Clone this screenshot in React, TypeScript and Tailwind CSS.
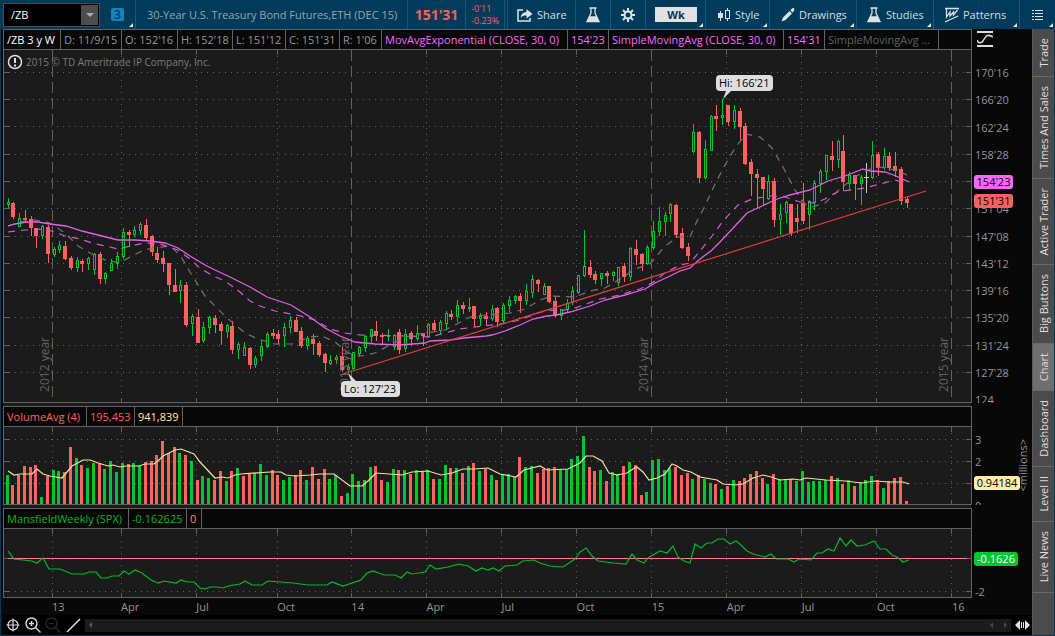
import React from 'react';

type Candle = [number, number, number, number, number];

const UP = 1;
const DOWN = -1;
const FLAT = 0;

// [direction, high, body top, body bottom, low]
const candles: Candle[] = [
  [UP, 198, 202, 205, 208], [DOWN, 202, 203, 217, 219], [UP, 213, 218, 227, 227], [DOWN, 210, 218, 220, 223],
  [DOWN, 216, 219, 228, 236], [DOWN, 228, 228, 236, 248], [UP, 225, 226, 236, 239], [DOWN, 225, 227, 254, 263],
  [UP, 247, 249, 255, 257], [UP, 241, 245, 250, 253], [DOWN, 241, 246, 259, 260], [DOWN, 256, 258, 268, 270],
  [UP, 257, 260, 268, 272], [DOWN, 259, 261, 264, 272], [UP, 257, 258, 264, 270], [UP, 253, 254, 270, 275],
  [DOWN, 252, 254, 279, 284], [UP, 272, 273, 279, 284], [UP, 259, 263, 271, 271], [UP, 252, 256, 264, 269],
  [UP, 228, 232, 257, 259], [DOWN, 230, 232, 235, 247], [UP, 226, 230, 235, 237], [UP, 222, 224, 231, 235],
  [DOWN, 219, 225, 238, 240], [DOWN, 235, 236, 252, 256], [DOWN, 247, 253, 260, 263], [DOWN, 251, 258, 264, 272],
  [DOWN, 263, 263, 285, 295], [DOWN, 269, 285, 292, 292], [UP, 280, 285, 291, 303], [DOWN, 282, 285, 325, 327],
  [UP, 314, 316, 324, 336], [DOWN, 309, 317, 343, 343], [UP, 322, 327, 341, 343], [UP, 316, 317, 328, 334],
  [DOWN, 315, 318, 325, 333], [DOWN, 322, 324, 331, 345], [UP, 324, 325, 332, 338], [DOWN, 321, 326, 350, 354],
  [UP, 342, 344, 350, 359], [UP, 342, 347, 356, 356], [DOWN, 347, 348, 365, 369], [UP, 356, 358, 365, 368],
  [UP, 340, 346, 356, 361], [UP, 332, 334, 347, 348], [DOWN, 329, 333, 336, 339], [DOWN, 330, 334, 339, 344],
  [UP, 323, 327, 336, 347], [UP, 316, 320, 328, 333], [DOWN, 317, 320, 332, 332], [DOWN, 327, 331, 346, 348],
  [UP, 336, 338, 346, 350], [DOWN, 334, 339, 344, 355], [DOWN, 341, 343, 355, 357], [DOWN, 353, 354, 363, 372],
  [UP, 355, 360, 364, 365], [UP, 355, 357, 360, 364], [DOWN, 347, 356, 370, 372], [UP, 364, 367, 370, 373],
  [UP, 352, 352, 369, 370], [UP, 346, 347, 354, 357], [UP, 335, 336, 348, 352], [UP, 329, 329, 337, 344],
  [DOWN, 321, 331, 336, 341], [DOWN, 333, 335, 337, 344], [UP, 329, 335, 337, 341], [UP, 334, 335, 347, 350],
  [DOWN, 329, 332, 350, 354], [UP, 329, 334, 349, 352], [DOWN, 331, 333, 339, 346], [UP, 325, 333, 339, 341],
  [DOWN, 333, 333, 336, 346], [UP, 323, 324, 337, 338], [DOWN, 320, 323, 330, 332], [UP, 320, 322, 331, 334],
  [UP, 311, 313, 324, 330], [DOWN, 310, 314, 317, 320], [UP, 300, 305, 317, 322], [DOWN, 302, 305, 309, 314],
  [UP, 298, 307, 309, 312], [DOWN, 306, 306, 319, 327], [UP, 313, 316, 319, 326], [DOWN, 312, 316, 319, 325],
  [UP, 305, 309, 319, 321], [DOWN, 307, 308, 322, 327], [UP, 303, 305, 321, 324], [UP, 296, 300, 306, 312],
  [UP, 295, 296, 301, 304], [DOWN, 293, 296, 301, 313], [UP, 284, 291, 301, 305], [UP, 275, 279, 293, 298],
  [DOWN, 279, 280, 284, 292], [UP, 283, 286, 295, 295], [DOWN, 286, 286, 302, 303], [DOWN, 296, 301, 316, 317],
  [UP, 309, 309, 316, 320], [UP, 299, 303, 310, 313], [UP, 286, 291, 303, 305], [UP, 275, 275, 293, 294],
  [UP, 230, 266, 276, 277], [DOWN, 260, 267, 275, 278], [DOWN, 271, 274, 280, 284], [UP, 273, 273, 279, 286],
  [DOWN, 271, 273, 276, 284], [UP, 271, 272, 276, 281], [UP, 267, 267, 283, 286], [DOWN, 263, 266, 277, 282],
  [UP, 247, 248, 277, 281], [DOWN, 240, 249, 255, 265], [DOWN, 253, 254, 264, 271], [UP, 245, 247, 264, 265],
  [UP, 221, 231, 248, 250], [UP, 207, 221, 232, 236], [UP, 212, 215, 222, 236], [UP, 203, 204, 214, 222],
  [DOWN, 204, 205, 235, 238], [DOWN, 228, 233, 248, 249], [DOWN, 243, 247, 256, 261], [UP, 124, 132, 152, 153],
  [DOWN, 131, 132, 178, 183], [UP, 140, 149, 178, 179], [UP, 115, 116, 151, 151], [DOWN, 105, 116, 119, 131],
  [UP, 99, 115, 118, 125], [DOWN, 105, 105, 122, 126], [UP, 105, 110, 122, 129], [DOWN, 108, 111, 127, 140],
  [DOWN, 123, 126, 164, 165], [DOWN, 159, 162, 174, 196], [DOWN, 169, 174, 178, 208], [DOWN, 177, 177, 189, 205],
  [UP, 175, 181, 199, 200], [DOWN, 178, 181, 220, 227], [UP, 204, 214, 220, 235], [UP, 201, 202, 213, 223],
  [DOWN, 204, 204, 233, 236], [DOWN, 204, 218, 222, 233], [DOWN, 183, 203, 221, 224], [UP, 200, 201, 215, 230],
  [UP, 180, 183, 203, 210], [UP, 169, 171, 184, 193], [UP, 155, 155, 172, 180], [DOWN, 141, 156, 160, 171],
  [UP, 140, 141, 160, 168], [DOWN, 135, 151, 182, 191], [UP, 172, 175, 184, 191], [DOWN, 175, 175, 184, 200],
  [UP, 175, 177, 184, 205], [FLAT, 163, 177, 178, 193], [UP, 141, 155, 178, 179], [DOWN, 152, 154, 168, 176],
  [UP, 148, 156, 168, 170], [DOWN, 152, 156, 168, 171], [DOWN, 152, 166, 171, 177], [DOWN, 167, 169, 201, 205],
  [DOWN, 197, 199, 203, 208],
];

// bar heights, negative for a week that closed lower
const volumes = [
  29, -19, -29, -38, -37, -39, 7, -28, 34, 33, -32, -57, 46, -39, 36, 41, -40, 35, 43, 32,
  41, -40, 41, 38, -42, -43, -49, -63, -51, -57, 51, -49, 43, -24, 28, 26, -24, -33, 23, -33,
  36, -28, -30, 31, 40, 29, -34, -29, 24, 27, -29, -34, 24, -37, -25, -35, 25, 29, -8, 11,
  30, 23, 24, 37, -38, -24, 22, 35, -34, 34, -30, 34, -33, 34, -25, 25, 39, -36, 36, -31,
  38, -41, 33, -35, 29, -24, 30, 30, 27, -47, 37, 38, -31, -35, -36, -37, 35, 35, 45, 48,
  68, -37, -33, 34, -23, 32, 30, -38, 42, -39, -9, 12, 44, 45, 34, 36, -37, -29, -31, 25,
  -29, 25, 21, -20, 15, -18, 24, -23, -26, -30, -33, -26, 20, -30, 25, 25, -25, 23, 33, 22,
  23, 23, 24, -28, 26, -20, 24, -18, 22, 24, 28, -24, 16, -23, -26, -27, -3,
];

const smaLine =
  '8,226 15,224 26,222 38,222 50,224 66,226 82,231 98,235 118,240 135,240 150,241 165,243 178,248 190,256 205,265 215,270 230,277 250,287 267,297 291,305 310,317 325,328 340,336 355,342 375,344 400,345 425,343 430,341 450,340 464,338 486,336 492,335 505,331 520,325 533,319 547,316 556,315 570,312 590,306 605,300 625,295 645,289 655,283 670,276 680,271 690,268 700,259 712,250 720,242 735,226 747,213 760,207 777,199 790,195 810,190 828,181 845,176 863,169 870,171 885,172 896,176 909,182';
const emaLine =
  '8,232 25,230 38,229 52,231 65,236 80,239 92,243 110,247 118,249 130,246 145,243 160,244 178,250 190,259 200,268 213,276 225,281 240,292 250,301 260,306 275,311 297,315 315,320 330,329 345,333 360,335 410,336 430,337 445,333 460,329 475,327 500,324 520,320 535,314 548,310 560,311 575,308 600,299 620,295 640,289 652,283 665,273 680,265 690,263 700,251 712,236 723,221 738,205 752,199 770,196 785,197 800,202 815,203 825,199 837,192 850,190 865,188 880,184 895,180 907,183';
const slowLine =
  '8,226 20,222 35,220 50,223 65,233 78,246 90,253 105,260 120,263 130,257 142,251 152,248 170,246 180,255 190,272 205,296 225,316 245,333 258,339 275,344 292,344 310,337 322,336 335,342 348,353 362,356 375,353 390,345 405,337 420,334 445,330 455,325 470,317 485,315 510,313 525,309 540,300 552,296 575,297 590,291 605,288 620,279 635,269 650,264 665,246 678,237 690,237 697,221 705,206 715,184 725,165 735,148 746,134 760,137 772,148 783,167 795,190 805,204 812,207 825,203 840,189 855,177 870,169 880,167 895,170 907,175';
const volumeLine =
  '8,471 14,475 20,474 32,474 37,469 43,474 50,476 62,478 72,466 83,460 90,460 98,463 108,466 113,465 120,467 126,466 139,466 145,464 154,464 158,461 163,456 175,450 181,449 194,454 200,462 215,478 222,477 228,478 235,475 241,474 270,472 281,472 286,475 295,476 310,475 320,474 334,474 350,486 362,486 368,481 376,473 402,475 412,472 428,471 441,475 452,473 463,469 474,469 488,468 500,474 516,477 524,470 540,466 547,470 568,469 580,463 586,456 593,456 602,461 609,473 617,475 627,473 633,469 637,467 643,472 649,480 657,478 665,474 672,464 677,466 683,470 691,472 700,477 717,480 723,484 735,485 743,484 753,478 763,475 771,477 780,480 793,479 800,480 806,478 826,480 845,481 862,483 875,481 890,482 903,482 909,484';
const mansfieldLine =
  '8,551 14,559 32,561 37,563 43,558 49,569 60,569 72,574 84,574 89,572 96,572 101,578 107,578 112,576 119,576 124,571 129,574 135,570 142,573 151,580 158,583 164,581 176,583 181,580 187,582 194,582 200,588 205,589 210,587 217,587 223,588 228,586 240,584 245,581 252,585 262,585 268,581 293,583 308,585 327,585 332,582 343,586 361,580 367,573 373,571 384,575 395,575 401,578 407,572 412,574 425,572 430,565 436,569 448,567 459,564 468,566 476,571 482,568 488,570 493,568 499,571 505,566 517,565 523,561 534,560 540,563 550,566 563,567 575,559 580,552 586,548 592,556 598,561 614,563 626,564 632,554 637,560 644,563 648,558 660,551 667,553 673,546 678,557 684,561 690,563 695,544 701,548 707,543 712,543 718,539 724,539 730,544 736,541 741,545 747,551 753,554 765,557 771,554 776,559 788,559 794,562 799,559 811,560 817,553 822,553 828,549 834,551 840,538 846,546 851,540 857,546 865,545 874,541 880,549 886,549 892,555 897,557 903,562 909,560';

const months = ['13', 'Apr', 'Jul', 'Oct', '14', 'Apr', 'Jul', 'Oct', '15', 'Apr', 'Jul', 'Oct', '16'];
const gridX = [52, 121, 196, 277, 351, 426, 501, 576, 651, 726, 801, 876, 951];
const priceGrid = [72, 99, 126, 154, 181, 208, 236, 263, 290, 317, 345, 372];
// the blank row sits under the moving average tag
const prices = ["170'16", "166'20", "162'24", "158'28", '', "151'04", "147'08", "143'12", "139'16", "135'20", "131'24", "127'28", '124'];

const barX = (i: number) => Math.floor(8 + i * 5.764);

interface GridProps {
  top: number;
  bottom: number;
  rows: number[];
  years?: boolean;
}

const Grid: React.FC<GridProps> = ({ top, bottom, rows, years }) => (
  <g stroke="#626262" shapeRendering="crispEdges">
    {rows.map((y) => (
      <g key={y}>
        <path d={`M9 ${y + 0.5}H965`} strokeDasharray="1 5" />
        <path d={`M4 ${y + 0.5}h5M966 ${y + 0.5}h5`} />
      </g>
    ))}
    {gridX.map((x, i) =>
      years && i % 4 === 0 ? (
        <path key={x} d={`M${x + 0.5} ${top}V${bottom}`} strokeDasharray="11 5" />
      ) : (
        <g key={x}>
          <path d={`M${x + 0.5} ${top + 6}V${bottom - 5}`} strokeDasharray="1 5" />
          <path d={`M${x + 0.5} ${top}v5M${x + 0.5} ${bottom - 4}v4`} />
        </g>
      ),
    )}
  </g>
);

const PriceChart = () => (
  <svg className="block h-[352px] w-full" viewBox="4 50 967 352" preserveAspectRatio="none">
    <Grid top={50} bottom={402} rows={priceGrid} years />
    <g shapeRendering="crispEdges">
      {candles.map(([dir, high, top, bottom, low], i) => {
        const x = barX(i);
        if (dir === UP) {
          return (
            <g key={i} stroke="#00c72f" fill="none">
              <path d={`M${x + 0.5} ${high}V${top}M${x + 0.5} ${bottom}V${low}`} />
              <rect x={x - 0.5} y={top + 0.5} width="2" height={Math.max(bottom - top - 1, 1)} />
            </g>
          );
        }
        const color = dir === DOWN ? '#ff6060' : '#c8c8c8';
        return (
          <g key={i} fill={color}>
            <rect x={x} y={high} width="1" height={low - high} />
            <rect x={x - 2} y={top} width={dir === DOWN ? 4 : 5} height={bottom - top} />
          </g>
        );
      })}
    </g>
    <g fill="none">
      <polyline points={slowLine} stroke="#747474" strokeWidth="1.2" strokeDasharray="7 6" />
      <polyline points={emaLine} stroke="#d65bd6" strokeWidth="1.2" strokeDasharray="7 6" />
      <polyline points={smaLine} stroke="#e65fe6" strokeWidth="1.3" />
      <path d="M340 375 926 191" stroke="#e23c3c" strokeWidth="1.2" />
    </g>
  </svg>
);

const VolumeChart = () => (
  <svg className="block h-[77px] w-full" viewBox="4 427 967 77" preserveAspectRatio="none">
    <Grid top={427} bottom={504} rows={[439, 461, 483]} />
    <g shapeRendering="crispEdges">
      {volumes.map((v, i) => (
        <rect key={i} x={barX(i) - 2} y={504 - Math.abs(v)} width="3" height={Math.abs(v)} fill={v > 0 ? '#00c72f' : '#ff6060'} />
      ))}
    </g>
    <polyline points={volumeLine} fill="none" stroke="#f3e1a0" strokeWidth="1.2" />
  </svg>
);

const MansfieldChart = () => (
  <svg className="block h-[68px] w-full" viewBox="4 529 967 68" preserveAspectRatio="none">
    <Grid top={529} bottom={597} rows={[591]} />
    <path d="M4 558.5h5M966 558.5h5" stroke="#626262" />
    <path d="M8 558.5H967" stroke="#ff7f92" shapeRendering="crispEdges" />
    <polyline points={mansfieldLine} fill="none" stroke="#00b82c" strokeWidth="1.2" />
  </svg>
);

const Flask = () => (
  <svg className="h-4 w-4" viewBox="0 0 16 16" fill="none" stroke="#dce2e6" strokeWidth="1.3">
    <path d="M4.5 1h7M6 1v5L2 14.5h12L10 6V1" />
    <path d="M4.7 10h6.6l2 4.3H2.7z" fill="#dce2e6" />
  </svg>
);

const ShareIcon = () => (
  <svg className="h-4 w-4" viewBox="0 0 16 16" fill="none" stroke="#dce2e6" strokeWidth="1.5">
    <path d="M6 3H1v11h12v-3" />
    <path d="M3.5 11c.5-4 2.5-6 6-6V2L15.5 7 9.5 11.5V8.500C7 8.500 5 9 3.500 11z" fill="#dce2e6" stroke="none" />
  </svg>
);

const Gear = () => (
  <svg className="h-4 w-4" viewBox="0 0 16 16" fill="none" stroke="#dce2e6" strokeWidth="2">
    <circle cx="8" cy="8" r="3.5" />
    <path d="M8 1v3M8 12v3M1 8h3M12 8h3M3 3l2.2 2.2M10.8 10.8 13 13M13 3l-2.2 2.2M5.2 10.8 3 13" />
  </svg>
);

const CandleIcon = () => (
  <svg className="h-4 w-4" viewBox="0 0 16 16" fill="none" stroke="#dce2e6" shapeRendering="crispEdges">
    <path d="M4.5 4v10M11.5 1v3M11.5 12v2" />
    <path d="M2 6h5v5H2z" fill="#dce2e6" stroke="none" />
    <path d="M9.5 3.5h4v8h-4z" />
  </svg>
);

const Pencil = () => (
  <svg className="h-4 w-4" viewBox="0 0 16 16" fill="#dce2e6">
    <path d="M1.5 14.5 3 10.5 9.5 4l2.5 2.5L5.5 13zM10.3 3.2 12 1.5c.7-.6 1.5-.5 2 0 .6.6.6 1.4 0 2L12.8 5.7z" />
  </svg>
);

const PatternIcon = () => (
  <svg className="h-4 w-4" viewBox="0 0 16 16" fill="none" stroke="#dce2e6" strokeWidth="1.3">
    <path d="M1 1.500h14M2.500 2v8l3.500-5v4l3.500-4v3L13.500 3M1 15l13-6" />
  </svg>
);

const ListIcon = () => (
  <svg className="h-3 w-3" viewBox="0 0 12 12" stroke="#dce2e6" shapeRendering="crispEdges">
    <path d="M0 1.5h2M3 1.5h8M0 4.5h2M3 4.5h8M0 7.5h2M3 7.5h8M0 10.5h2M3 10.5h8" />
  </svg>
);

const Corner = () => (
  <svg className="absolute right-0.5 bottom-0.5 h-1 w-1" viewBox="0 0 4 4" fill="#e8e8e8">
    <path d="M4 0v4H0z" />
  </svg>
);

interface ToolProps {
  className: string;
  icon?: React.ReactNode;
  label?: string;
  title?: string;
  menu?: boolean;
}

const Tool: React.FC<ToolProps> = ({ className, icon, label, title, menu }) => (
  <button type="button" aria-label={title} className={`relative flex h-full shrink-0 items-center border-l border-[#1c5677] ${className}`}>
    {icon}
    {label && <span>{label}</span>}
    {menu && <Corner />}
  </button>
);

const TopBar = () => (
  <header className="flex h-[29px] items-center bg-[#003b5b] pl-[3px] text-[11px] text-[#d5dde2]">
    <div className="flex h-6 w-[97px] shrink-0 items-center border border-[#4b4b4b] bg-black">
      <input aria-label="Symbol" defaultValue="/ZB" className="h-full w-[77px] bg-transparent pl-[7px] text-white outline-none" />
      <button type="button" aria-label="Symbol history" className="flex h-[20px] w-[17px] items-center justify-center bg-[#4d4d4d]">
        <svg className="h-1 w-2" viewBox="0 0 8 4" fill="#aaa"><path d="M0 0h8L4 4z" /></svg>
      </button>
    </div>
    <button type="button" className="relative flex h-full w-[35px] shrink-0 items-center justify-center">
      <span className="flex h-[13px] w-[13px] items-center justify-center rounded-xs bg-[#1583ba] text-[12px] font-semibold text-[#003b5b]">3</span>
      <Corner />
    </button>
    <div className="flex h-full min-w-0 flex-1 items-center overflow-hidden border-l border-[#1c5677] pl-[11px] whitespace-nowrap text-[#96a5ae]">
      30-Year U.S. Treasury Bond Futures,ETH (DEC 15)
    </div>
    <div className="flex h-full w-[58px] shrink-0 items-center justify-center border-l border-[#1c5677] text-[14px] font-bold text-[#ff6060]">151'31</div>
    <div className="flex h-full w-[39px] shrink-0 flex-col justify-center border-l border-[#1c5677] pl-[5px] text-[9px] leading-[12px] text-[#ff6060]">
      <span>-0'11</span>
      <span>-0.23%</span>
    </div>
    <div className="h-full w-[3px] shrink-0 border-l border-[#1c5677]" />
    <Tool className="w-[68px] gap-1 pl-[9px]" icon={<ShareIcon />} label="Share" />
    <Tool className="w-[35px] justify-center" icon={<Flask />} title="Lab" />
    <Tool className="w-[35px] justify-center" icon={<Gear />} title="Settings" />
    <button type="button" className="relative flex h-full w-[60px] shrink-0 items-center border-l border-[#1c5677] pl-[9px]">
      <span className="flex h-[15px] w-[42px] items-center justify-center bg-[#e1e1e1] font-bold text-[#003b5b]">Wk</span>
      <Corner />
    </button>
    <Tool className="w-[64px] gap-[3px] pl-[10px]" icon={<CandleIcon />} label="Style" menu />
    <Tool className="w-[87px] gap-[3px] pl-[10px]" icon={<Pencil />} label="Drawings" menu />
    <Tool className="w-[77px] gap-1 pl-[9px]" icon={<Flask />} label="Studies" menu />
    <Tool className="w-[86px] gap-[3px] pl-[10px]" icon={<PatternIcon />} label="Patterns" menu />
    <Tool className="w-[36px] pl-3" icon={<ListIcon />} title="Chart list" menu />
  </header>
);

interface CellProps {
  className: string;
  children: React.ReactNode;
}

const Cell: React.FC<CellProps> = ({ className, children }) => (
  <div className={`flex shrink-0 items-center border-r border-[#626262] pl-[3px] whitespace-nowrap ${className}`}>{children}</div>
);

interface PanelProps {
  header: React.ReactNode;
  axis: React.ReactNode;
  axisSize: string;
  children: React.ReactNode;
}

const Panel: React.FC<PanelProps> = ({ header, axis, axisSize, children }) => (
  <section className="flex">
    <div className="min-w-0 flex-1 border-x border-b border-[#626262] bg-[#1b1b1b]">
      <div className="flex h-[21px] overflow-hidden border-y border-[#626262] bg-[#080808]">{header}</div>
      <div className="relative">{children}</div>
    </div>
    <div className={`relative w-[60px] shrink-0 overflow-hidden text-[#959595] ${axisSize}`}>{axis}</div>
  </section>
);

const YearLabel: React.FC<CellProps> = ({ className, children }) => (
  <span className={`absolute bottom-[10px] rotate-180 text-[12px] leading-[14px] text-[#626262] [writing-mode:vertical-rl] ${className}`}>{children}</span>
);

const tag = 'absolute left-[2px] flex h-[14px] items-center justify-center rounded-[3px]';

const tabs = [
  { name: 'Trade', size: 'h-[48px]' },
  { name: 'Times And Sales', size: 'h-[102px]' },
  { name: 'Active Trader', size: 'h-[86px]' },
  { name: 'Big Buttons', size: 'h-[79px]' },
  { name: 'Chart', size: 'h-[47px]', active: true },
  { name: 'Dashboard', size: 'h-[76px]' },
  { name: 'Level II', size: 'h-[55px]' },
  { name: 'Live News', size: 'h-[71px]' },
];

const SideTabs = () => (
  <nav className="flex w-[22px] shrink-0 flex-col border-l border-[#5c5c5c] bg-[#4b4b4b]">
    {tabs.map((tab) => (
      <button
        key={tab.name}
        type="button"
        className={`flex w-full items-center justify-center border-b border-[#696969] text-[#dedede] ${tab.size} ${tab.active ? 'bg-[#6f6f6f]' : ''}`}
      >
        <span className="rotate-180 [writing-mode:vertical-rl]">{tab.name}</span>
      </button>
    ))}
  </nav>
);

const Footer = () => (
  <footer className="flex h-5 items-center gap-1 bg-black pl-[2px]">
    <button type="button" aria-label="Crosshair">
      <svg className="h-4 w-4" viewBox="0 0 16 16" fill="none" stroke="#dedede" strokeWidth="1.2">
        <circle cx="8" cy="8" r="5" />
        <path d="M8 1.5v13M1.5 8h13" />
      </svg>
    </button>
    <button type="button" aria-label="Zoom in">
      <svg className="h-4 w-4" viewBox="0 0 16 16" fill="none" stroke="#dedede" strokeWidth="1.4">
        <circle cx="6.5" cy="6.5" r="5.5" />
        <path d="M10.5 10.5 15.5 15.5M4 6.5h5M6.5 4v5" />
      </svg>
    </button>
    <button type="button" aria-label="Zoom out" disabled>
      <svg className="h-4 w-4" viewBox="0 0 16 16" fill="none" stroke="#262626" strokeWidth="1.4">
        <circle cx="6.5" cy="6.5" r="5.5" />
        <path d="M10.5 10.5 15.5 15.5M4 6.5h5" />
      </svg>
    </button>
    <button type="button" aria-label="Line tool">
      <svg className="h-4 w-4" viewBox="0 0 16 16" stroke="#e6e6e6" strokeWidth="1.5">
        <path d="M2 15 15 2" />
      </svg>
    </button>
    <div className="flex h-[13px] min-w-0 flex-1 items-center bg-[#1b1b1b] px-1">
      <svg className="h-[6px] w-[3px]" viewBox="0 0 3 6" fill="#5a5a5a"><path d="M3 0v6L0 3z" /></svg>
      <svg className="ml-auto h-[6px] w-[3px]" viewBox="0 0 3 6" fill="#4a4a4a"><path d="M3 0v6L0 3z" /></svg>
      <svg className="ml-[11px] h-[6px] w-[3px]" viewBox="0 0 3 6" fill="#4a4a4a"><path d="M0 0v6l3-3z" /></svg>
    </div>
    <button type="button" aria-label="Expand area" className="mr-[2px]">
      <svg className="h-[10px] w-[15px]" viewBox="0 0 15 10" fill="#e1e1e1">
        <path d="M5 0v10L0 5zM10 0v10l5-5zM6 2h1v6H6zM8 2h1v6H8z" />
      </svg>
    </button>
  </footer>
);

export default function App() {
  return (
    <div className="flex min-h-screen flex-col border-b border-[#003b5b] bg-[#080808] font-['Open_Sans','Noto_Sans',sans-serif] text-[11px] leading-[14px]">
      <TopBar />
      <div className="flex flex-1 border-x border-[#003b5b]">
        <main className="flex min-w-0 flex-1 flex-col pl-[2px]">
          <Panel
            axisSize="h-[374px]"
            header={
              <>
                <Cell className="w-[57px] text-white">/ZB 3 y W</Cell>
                <Cell className="w-[61px] text-[#959595]">D: 11/9/15</Cell>
                <Cell className="w-[56px] text-[#959595]">O: 152'16</Cell>
                <Cell className="w-[55px] text-[#959595]">H: 152'18</Cell>
                <Cell className="w-[53px] text-[#959595]">L: 151'12</Cell>
                <Cell className="w-[54px] text-[#959595]">C: 151'31</Cell>
                <Cell className="w-[42px] text-[#959595]">R: 1'06</Cell>
                <Cell className="w-[186px] text-[#ff66ff]">MovAvgExponential (CLOSE, 30, 0)</Cell>
                <Cell className="w-[41px] text-[#ff66ff]">154'23</Cell>
                <Cell className="w-[175px] text-[#ff66ff]">SimpleMovingAvg (CLOSE, 30, 0)</Cell>
                <Cell className="w-[41px] text-[#ff66ff]">154'31</Cell>
                <Cell className="w-[114px] text-[#626262]">SimpleMovingAvg ...</Cell>
              </>
            }
            axis={
              <>
                <svg className="absolute top-[2px] left-[5px] h-4 w-4" viewBox="0 0 16 16" fill="none" stroke="#dedede" strokeWidth="1.5">
                  <path d="M0 1h16M0 15h16" strokeWidth="2" />
                  <path d="M0 9c1 3 4 4 6 1 2-4 4-7 8-5l2 1" />
                </svg>
                <div className="flex h-[378px] flex-col justify-between pt-[37px] pl-[3px]">
                  {prices.map((price, i) => (
                    <span key={i} className="h-[14px]">{price}</span>
                  ))}
                </div>
                <span className={`${tag} top-[146px] w-[39px] bg-[#ff66ff] text-black`}>154'23</span>
                <span className={`${tag} top-[165px] w-[39px] bg-[#ff6060] text-black`}>151'31</span>
              </>
            }
          >
            <PriceChart />
            <div className="absolute top-1 left-[3px] flex items-center gap-[3px] text-[10px] text-[#7c7c7c]">
              <svg className="h-4 w-4" viewBox="0 0 16 16" fill="none" stroke="#dedede" strokeWidth="1.5">
                <circle cx="8" cy="8" r="6.5" />
                <path d="M8 4v5M8 10.5v2" strokeWidth="2" />
              </svg>
              2015 © TD Ameritrade IP Company, Inc.
            </div>
            <YearLabel className="left-[3.5%]">2012 year</YearLabel>
            <YearLabel className="left-[34.5%]">2013 year</YearLabel>
            <YearLabel className="left-[65.5%]">2014 year</YearLabel>
            <YearLabel className="left-[96.5%]">2015 year</YearLabel>
            <div className="absolute top-[25px] left-[73.6%] flex h-4 w-[57px] items-center justify-center rounded-[4px] bg-[#dedede] text-black">
              Hi: 166'21
              <svg className="absolute top-4 left-[7px] h-2 w-2" viewBox="0 0 8 8" fill="#dedede"><path d="M3 0h5L0 8z" /></svg>
            </div>
            <div className="absolute top-[331px] left-[34.8%] flex h-4 w-[59px] items-center justify-center rounded-[4px] bg-[#dedede] text-black">
              Lo: 127'23
              <svg className="absolute -top-2 left-[7px] h-2 w-2" viewBox="0 0 8 8" fill="#dedede"><path d="M3 8h5L0 0z" /></svg>
            </div>
          </Panel>

          <div className="mr-[61px] h-[3px] bg-[#1b1b1b]" />

          <Panel
            axisSize="h-[99px]"
            header={
              <>
                <Cell className="w-[83px] text-[#ff6060]">VolumeAvg (4)</Cell>
                <Cell className="w-[48px] text-[#ff6060]">195,453</Cell>
                <Cell className="w-[48px] text-[#ffeda8]">941,839</Cell>
              </>
            }
            axis={
              <>
                <div className="flex flex-col gap-2 pt-[27px] pl-[3px]">
                  <span>3</span>
                  <span>2</span>
                  <span className="mt-[22px]">0</span>
                </div>
                <span className={`${tag} top-[70px] w-[46px] bg-[#ffeda8] text-black`}>0.94184</span>
                <span className="absolute top-[33px] right-[2px] rotate-180 [writing-mode:vertical-rl]">&lt;millions&gt;</span>
              </>
            }
          >
            <VolumeChart />
          </Panel>

          <div className="mr-[61px] h-[3px] bg-[#1b1b1b]" />

          <Panel
            axisSize="h-[90px]"
            header={
              <>
                <Cell className="w-[125px] text-[#00b82c]">MansfieldWeekly (SPX)</Cell>
                <Cell className="w-[58px] text-[#00b82c]">-0.162625</Cell>
                <Cell className="w-[15px] text-[#ff7f92]">0</Cell>
              </>
            }
            axis={
              <>
                <span className={`${tag} top-[44px] w-[44px] bg-[#00c72f] text-white`}>-0.1626</span>
                <div className="pt-[77px] pl-[3px]">-2</div>
              </>
            }
          >
            <MansfieldChart />
          </Panel>

          <div className="mr-[62px] grid h-[17px] grid-cols-[49fr_69fr_75fr_81fr_74fr_75fr_75fr_75fr_75fr_75fr_75fr_75fr_75fr_18fr] items-center text-[#959595]">
            <span />
            {months.map((month, i) => (
              <span key={i}>{month}</span>
            ))}
          </div>
          <Footer />
        </main>
        <SideTabs />
      </div>
    </div>
  );
}
